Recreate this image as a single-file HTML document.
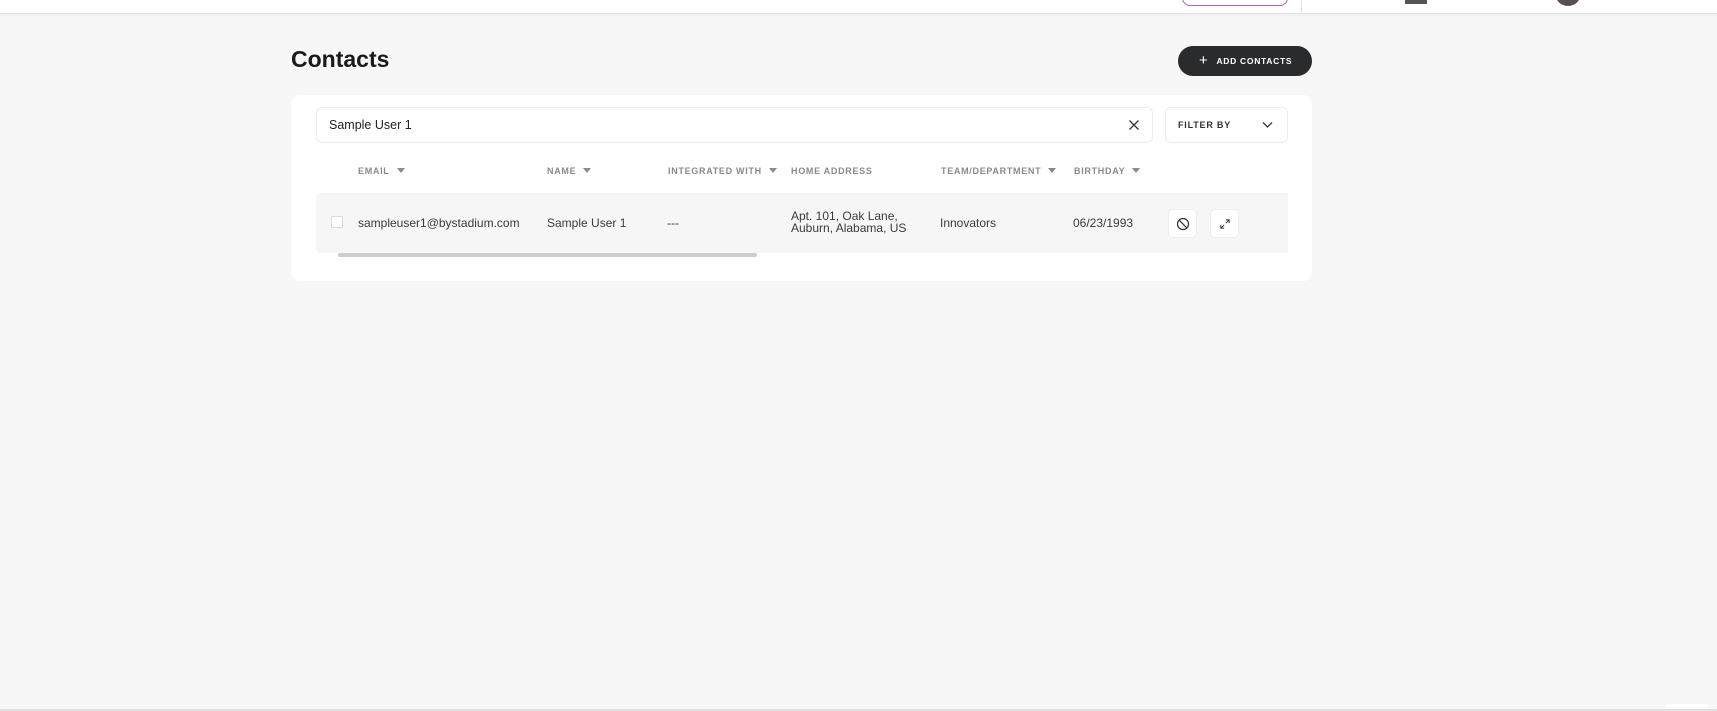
<!DOCTYPE html>
<html><head><style>
*{box-sizing:border-box;margin:0;padding:0}
body{width:1717px;height:711px;background:#f7f7f7;font-family:"Liberation Sans",sans-serif;position:relative;overflow:hidden;color:#333}
.abs{position:absolute}
.hdr{left:0;top:0;width:1717px;height:14px;background:#fff;border-bottom:1px solid #e2e2e2;box-shadow:0 1px 2px rgba(0,0,0,.05)}
.th{position:absolute;top:166px;font-size:9px;font-weight:bold;letter-spacing:.7px;color:#8a8a8a}
.tri{display:inline-block;width:0;height:0;border-left:4.5px solid transparent;border-right:4.5px solid transparent;border-top:5px solid #8a8a8a;margin-left:7px;vertical-align:1px}
.td{position:absolute;font-size:12px;color:#3a3a3a}
.ib{position:absolute;top:209px;width:29px;height:29px;background:#fff;border:1px solid #eee;border-radius:5px}
</style></head><body>
<div class="abs hdr"></div>
<div class="abs" style="left:1182px;top:-10px;width:106px;height:16px;border:1px solid #b060b0;border-radius:8px;background:#fff"></div>
<div class="abs" style="left:1301px;top:0;width:1px;height:14px;background:#e5e5e5"></div>
<div class="abs" style="left:1405px;top:0;width:22px;height:4px;background:#555"></div>
<div class="abs" style="left:1555px;top:-20px;width:26px;height:26px;border-radius:50%;background:#5a5050"></div>
<div class="abs" style="left:291px;top:46px;font-size:23px;font-weight:bold;color:#1a1a1a">Contacts</div>
<div class="abs" style="left:1178px;top:46px;width:134px;height:30px;border-radius:15px;background:#2a2b2d;color:#fff;font-size:8.5px;font-weight:bold;letter-spacing:.7px;line-height:30px;padding-left:21px;white-space:nowrap"><span style="font-size:15px;font-weight:normal;vertical-align:-1px;margin-right:8px">+</span>ADD CONTACTS</div>
<div class="abs" style="left:291px;top:95px;width:1021px;height:186px;background:#fff;border-radius:9px"></div>
<div class="abs" style="left:316px;top:107px;width:837px;height:36px;border:1px solid #ececec;border-radius:6px;font-size:12.5px;line-height:34px;padding-left:12px;color:#222">Sample User 1
<svg style="position:absolute;right:12px;top:11px" width="12" height="12" viewBox="0 0 12 12"><path d="M1.5 1.5L10.5 10.5M10.5 1.5L1.5 10.5" stroke="#333" stroke-width="1.3"/></svg></div>
<div class="abs" style="left:1165px;top:107px;width:123px;height:36px;border:1px solid #ececec;border-radius:6px;font-size:9px;font-weight:bold;letter-spacing:.8px;line-height:34px;padding-left:12px;color:#333">FILTER BY
<svg style="position:absolute;right:14px;top:13px" width="11" height="8" viewBox="0 0 11 8"><path d="M1 1.5L5.5 6L10 1.5" stroke="#333" stroke-width="1.3" fill="none"/></svg></div>
<div class="th" style="left:358px">EMAIL<span class="tri"></span></div>
<div class="th" style="left:547px">NAME<span class="tri"></span></div>
<div class="th" style="left:668px">INTEGRATED WITH<span class="tri"></span></div>
<div class="th" style="left:791px">HOME ADDRESS</div>
<div class="th" style="left:941px">TEAM/DEPARTMENT<span class="tri"></span></div>
<div class="th" style="left:1074px">BIRTHDAY<span class="tri"></span></div>
<div class="abs" style="left:316px;top:193px;width:972px;height:60px;background:#f6f6f6;border-radius:4px 0 0 4px"></div>
<div class="abs" style="left:331px;top:216px;width:12px;height:12px;border:1px solid #d8d8d8;border-radius:2px;background:#fff"></div>
<div class="td" style="left:358px;top:216px">sampleuser1@bystadium.com</div>
<div class="td" style="left:547px;top:216px">Sample User 1</div>
<div class="td" style="left:667px;top:216px">---</div>
<div class="td" style="left:791px;top:210px;line-height:12px">Apt. 101, Oak Lane,<br>Auburn, Alabama, US</div>
<div class="td" style="left:940px;top:216px">Innovators</div>
<div class="td" style="left:1073px;top:216px">06/23/1993</div>
<div class="ib" style="left:1168px"><svg style="position:absolute;left:7px;top:7px" width="14" height="14" viewBox="0 0 14 14"><circle cx="7" cy="7" r="5.5" stroke="#333" stroke-width="1.2" fill="none"/><path d="M3.2 3.2L10.8 10.8" stroke="#333" stroke-width="1.2"/></svg></div>
<div class="ib" style="left:1210px"><svg style="position:absolute;left:9px;top:9px" width="10" height="10" viewBox="0 0 12 12"><path d="M7 1H11V5M11 1L7 5M5 11H1V7M1 11L5 7" stroke="#333" stroke-width="1.2" fill="none"/></svg></div>
<div class="abs" style="left:338px;top:253px;width:419px;height:4px;background:#cdcdcd;border-radius:2px"></div>
<div class="abs" style="left:0;top:709px;width:1717px;height:2px;background:#e0e0e0"></div>
<div class="abs" style="left:1665px;top:704px;width:43px;height:5px;background:#fff;border-radius:3px 3px 0 0"></div>
</body></html>
